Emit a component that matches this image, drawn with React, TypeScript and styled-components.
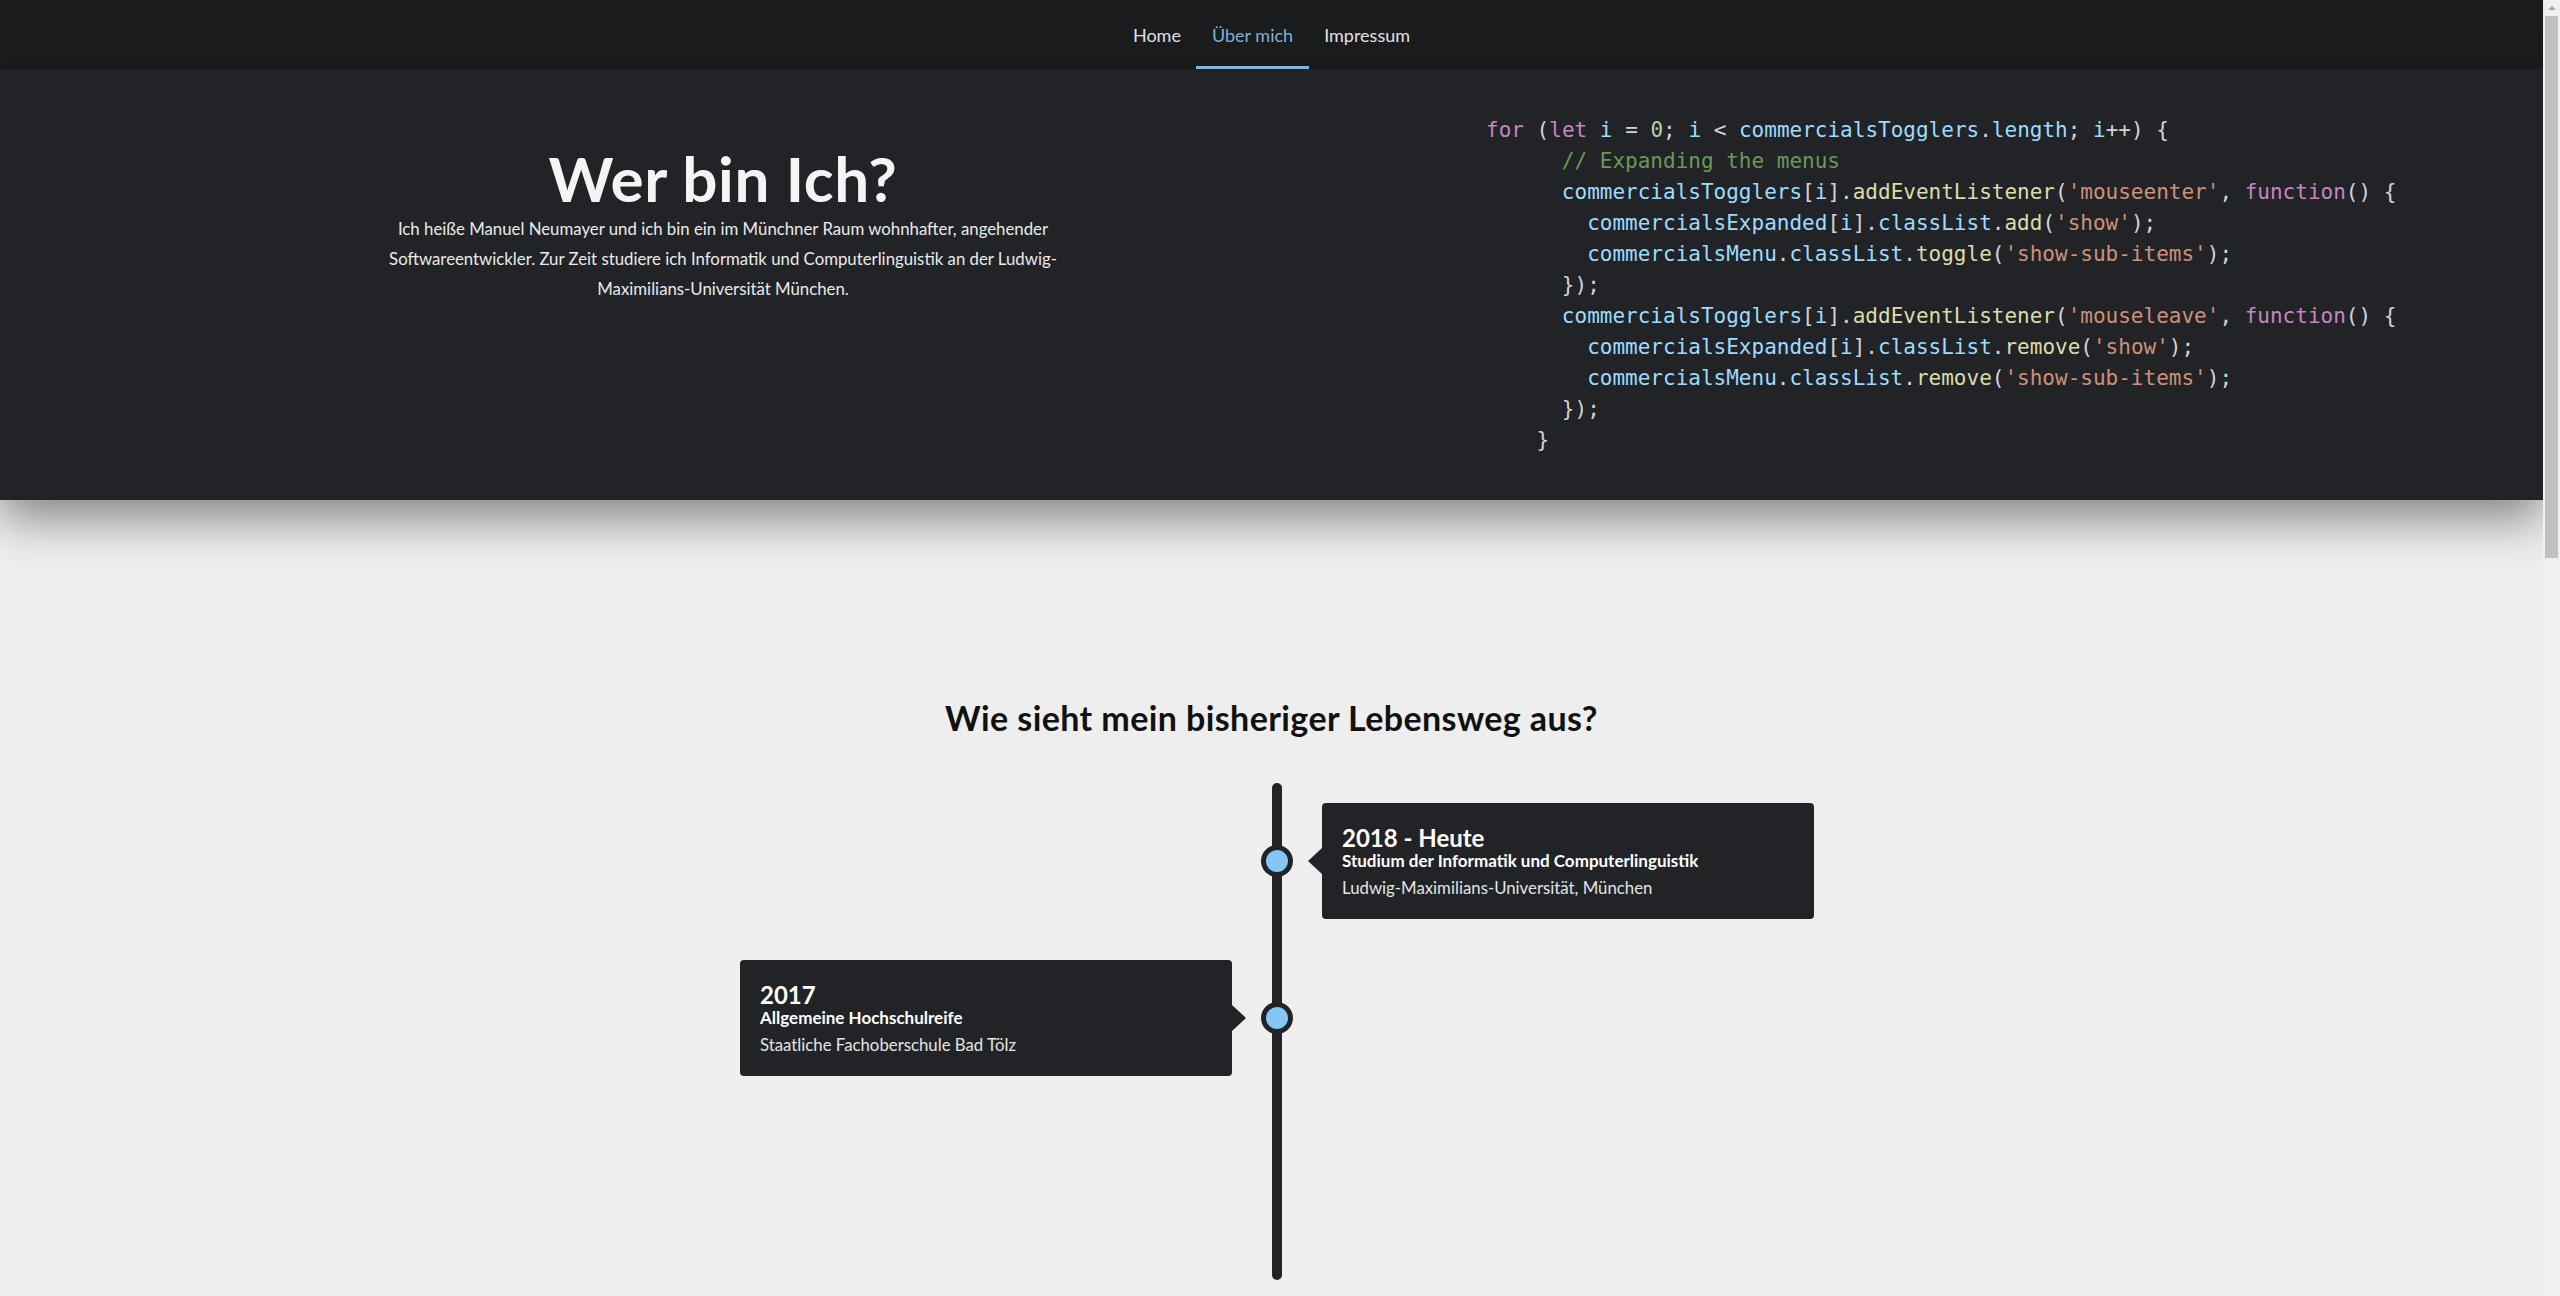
import React from 'react';
import styled, { createGlobalStyle } from 'styled-components';

const GlobalStyle = createGlobalStyle`
  html, body {
    margin: 0;
    padding: 0;
    background: #eeeeee;
    font-family: Lato, "Open Sans", sans-serif;
  }
`;

type TokenKind = 'kw' | 'var' | 'fn' | 'str' | 'num' | 'cmt' | 'punc';
type Token = [string, TokenKind];

const colors: Record<TokenKind, string> = {
  kw: '#c586c0',
  var: '#9cdcfe',
  fn: '#dcdcaa',
  str: '#ce9178',
  num: '#b5cea8',
  cmt: '#6a9955',
  punc: '#d4d4d4',
};

const code: { indent: number; tokens: Token[] }[] = [
  {
    indent: 0,
    tokens: [
      ['for', 'kw'], [' (', 'punc'], ['let', 'kw'], [' ', 'punc'], ['i', 'var'], [' = ', 'punc'],
      ['0', 'num'], ['; ', 'punc'], ['i', 'var'], [' < ', 'punc'], ['commercialsTogglers', 'var'],
      ['.', 'punc'], ['length', 'var'], ['; ', 'punc'], ['i', 'var'], ['++) {', 'punc'],
    ],
  },
  { indent: 6, tokens: [['// Expanding the menus', 'cmt']] },
  {
    indent: 6,
    tokens: [
      ['commercialsTogglers', 'var'], ['[', 'punc'], ['i', 'var'], [']', 'punc'], ['.', 'punc'],
      ['addEventListener', 'fn'], ['(', 'punc'], ["'mouseenter'", 'str'], [', ', 'punc'],
      ['function', 'kw'], ['() {', 'punc'],
    ],
  },
  {
    indent: 8,
    tokens: [
      ['commercialsExpanded', 'var'], ['[', 'punc'], ['i', 'var'], [']', 'punc'], ['.', 'punc'],
      ['classList', 'var'], ['.', 'punc'], ['add', 'fn'], ['(', 'punc'], ["'show'", 'str'], [');', 'punc'],
    ],
  },
  {
    indent: 8,
    tokens: [
      ['commercialsMenu', 'var'], ['.', 'punc'], ['classList', 'var'], ['.', 'punc'], ['toggle', 'fn'],
      ['(', 'punc'], ["'show-sub-items'", 'str'], [');', 'punc'],
    ],
  },
  { indent: 6, tokens: [['});', 'punc']] },
  {
    indent: 6,
    tokens: [
      ['commercialsTogglers', 'var'], ['[', 'punc'], ['i', 'var'], [']', 'punc'], ['.', 'punc'],
      ['addEventListener', 'fn'], ['(', 'punc'], ["'mouseleave'", 'str'], [', ', 'punc'],
      ['function', 'kw'], ['() {', 'punc'],
    ],
  },
  {
    indent: 8,
    tokens: [
      ['commercialsExpanded', 'var'], ['[', 'punc'], ['i', 'var'], [']', 'punc'], ['.', 'punc'],
      ['classList', 'var'], ['.', 'punc'], ['remove', 'fn'], ['(', 'punc'], ["'show'", 'str'], [');', 'punc'],
    ],
  },
  {
    indent: 8,
    tokens: [
      ['commercialsMenu', 'var'], ['.', 'punc'], ['classList', 'var'], ['.', 'punc'], ['remove', 'fn'],
      ['(', 'punc'], ["'show-sub-items'", 'str'], [');', 'punc'],
    ],
  },
  { indent: 6, tokens: [['});', 'punc']] },
  { indent: 4, tokens: [['}', 'punc']] },
];

const stations = [
  {
    side: 'right' as const,
    year: '2018 - Heute',
    title: 'Studium der Informatik und Computerlinguistik',
    place: 'Ludwig-Maximilians-Universität, München',
  },
  {
    side: 'left' as const,
    year: '2017',
    title: 'Allgemeine Hochschulreife',
    place: 'Staatliche Fachoberschule Bad Tölz',
  },
];

const App = (): JSX.Element => {
  return (
    <Page>
      <GlobalStyle />
      <Main>
        <NavBar>
          <NavLink href="#">Home</NavLink>
          <NavLink href="#" active>
            Über mich
          </NavLink>
          <NavLink href="#">Impressum</NavLink>
        </NavBar>

        <Hero>
          <Intro>
            <Title>Wer bin Ich?</Title>
            <Lead>
              Ich heiße Manuel Neumayer und ich bin ein im Münchner Raum wohnhafter, angehender
              Softwareentwickler. Zur Zeit studiere ich Informatik und Computerlinguistik an der Ludwig-
              Maximilians-Universität München.
            </Lead>
          </Intro>
          <Code>
            {code.map((line, i) => (
              <CodeLine key={i}>
                {' '.repeat(line.indent)}
                {line.tokens.map(([text, kind], j) => (
                  <Tok key={j} kind={kind}>
                    {text}
                  </Tok>
                ))}
              </CodeLine>
            ))}
          </Code>
        </Hero>

        <Career>
          <SectionTitle>Wie sieht mein bisheriger Lebensweg aus?</SectionTitle>
          <Timeline>
            <Line />
            {stations.map((s, i) => (
              <React.Fragment key={s.year}>
                <Card side={s.side} row={i * 2 + 2}>
                  <Year>{s.year}</Year>
                  <Degree>{s.title}</Degree>
                  <Place>{s.place}</Place>
                </Card>
                <Dot row={i * 2 + 2} />
              </React.Fragment>
            ))}
          </Timeline>
        </Career>
      </Main>

      {/* the page scrolls: the window's scroll bar */}
      <ScrollRail>
        <ScrollArrow />
        <ScrollThumb />
      </ScrollRail>
    </Page>
  );
};

const Page = styled.div`
  display: flex;
  align-items: flex-start;
`;

const Main = styled.div`
  flex: 1;
  min-width: 0;
`;

const ScrollRail = styled.div`
  flex: 0 0 17px;
  display: flex;
  flex-direction: column;
  align-items: center;
  position: relative;
  z-index: 2;
  height: 1296px;
  background: #f1f1f1;
`;

const ScrollArrow = styled.div`
  width: 0;
  height: 0;
  margin: 6px 0 6px;
  border-left: 4px solid transparent;
  border-right: 4px solid transparent;
  border-bottom: 4px solid #a3a3a3;
`;

const ScrollThumb = styled.div`
  width: 13px;
  height: 542px;
  background: #c1c1c1;
`;

const NavBar = styled.nav`
  display: flex;
  justify-content: center;
  height: 69px;
  background: #1b1c1e;
`;

const NavLink = styled.a<{ active?: boolean }>`
  display: flex;
  align-items: center;
  box-sizing: border-box;
  height: 69px;
  padding: 3px 15.5px 0;
  font-size: 18px;
  text-decoration: none;
  color: ${(p) => (p.active ? '#7db3d8' : '#e2e2e2')};
  border-bottom: 3px solid ${(p) => (p.active ? '#8ccbf3' : 'transparent')};
`;

const Hero = styled.header`
  position: relative;
  z-index: 1;
  display: flex;
  align-items: flex-start;
  height: 431px;
  background: #222327;
  box-shadow: 0 18px 45px rgba(0, 0, 0, 0.45);
`;

const Intro = styled.div`
  flex: 0 0 1446px;
  display: flex;
  flex-direction: column;
  align-items: center;
  padding-top: 77px;
  color: #f4f4f4;
  text-align: center;
`;

const Title = styled.h1`
  margin: 0;
  font-size: 62px;
  line-height: 64px;
  letter-spacing: 0.6px;
  font-weight: 700;
`;

const Lead = styled.p`
  width: 700px;
  margin: 4px 0 0;
  font-size: 16.8px;
  line-height: 30px;
  font-weight: 400;
  color: #eaeaea;
`;

const Code = styled.pre`
  margin: 46px 0 0 40px;
  font-family: "DejaVu Sans Mono", "Liberation Mono", monospace;
  font-size: 21px;
  line-height: 31px;
`;

const CodeLine = styled.div`
  white-space: pre;
  color: #d4d4d4;
`;

const Tok = styled.span<{ kind: TokenKind }>`
  color: ${(p) => colors[p.kind]};
`;

const Career = styled.section`
  padding: 198px 0 1700px;
  background: #eeeeee;
`;

const SectionTitle = styled.h2`
  margin: 0;
  text-align: center;
  font-size: 34px;
  line-height: 40px;
  letter-spacing: 0.4px;
  font-weight: 700;
  color: #111;
`;

const Timeline = styled.div`
  display: grid;
  grid-template-columns: 492px 90px 492px;
  grid-template-rows: 20px auto 41px auto 204px;
  justify-content: center;
  margin-top: 45px;
  padding-left: 11px;
`;

const Line = styled.div`
  grid-column: 2;
  grid-row: 1 / -1;
  justify-self: center;
  width: 10px;
  border-radius: 5px;
  background: #222326;
`;

const Dot = styled.div<{ row: number }>`
  grid-column: 2;
  grid-row: ${(p) => p.row};
  align-self: center;
  justify-self: center;
  width: 22px;
  height: 22px;
  border: 5px solid #222326;
  border-radius: 50%;
  background: #84c6f4;
`;

const Card = styled.div<{ side: 'left' | 'right'; row: number }>`
  position: relative;
  grid-column: ${(p) => (p.side === 'left' ? 1 : 3)};
  grid-row: ${(p) => p.row};
  box-sizing: border-box;
  height: 116px;
  padding: 21px 20px 0;
  border-radius: 4px;
  background: #222326;
  color: #fff;

  &::before {
    content: '';
    position: absolute;
    top: 45px;
    ${(p) => (p.side === 'left' ? 'right: -14px;' : 'left: -14px;')}
    border-top: 13px solid transparent;
    border-bottom: 13px solid transparent;
    ${(p) =>
      p.side === 'left' ? 'border-left: 14px solid #222326;' : 'border-right: 14px solid #222326;'}
  }
`;

const Year = styled.div`
  font-size: 24px;
  line-height: 27px;
  font-weight: 700;
`;

const Degree = styled.div`
  font-size: 17px;
  line-height: 20px;
  font-weight: 700;
`;

const Place = styled.div`
  margin-top: 7px;
  font-size: 16.8px;
  line-height: 20px;
  color: #e4e4e4;
`;

export default App;
